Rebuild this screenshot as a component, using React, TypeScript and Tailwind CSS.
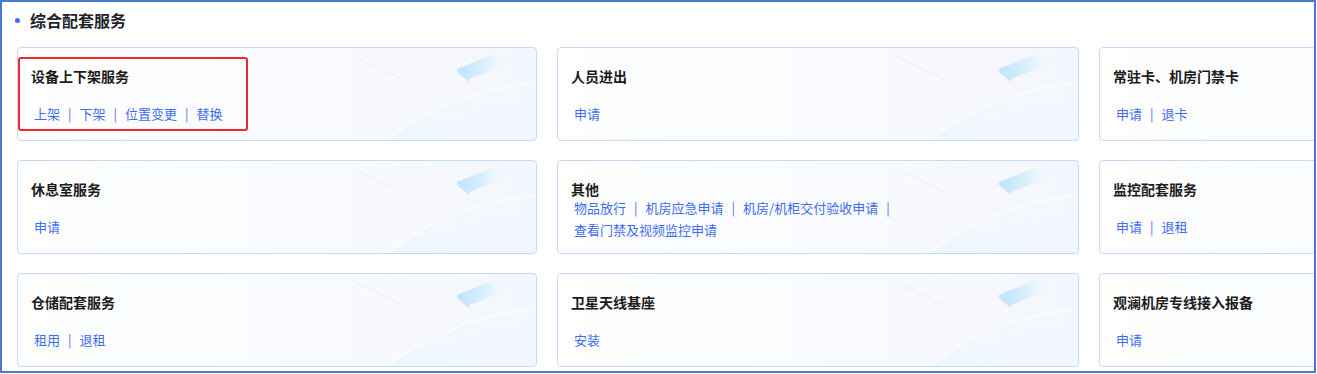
import React from 'react';

type Service = {
    title: string;
    links: string[];
    tight?: boolean;
    marked?: boolean;
};

const services: Service[] = [
    { title: '设备上下架服务', links: ['上架', '下架', '位置变更', '替换'], marked: true },
    { title: '人员进出', links: ['申请'] },
    { title: '常驻卡、机房门禁卡', links: ['申请', '退卡'] },
    { title: '休息室服务', links: ['申请'] },
    { title: '其他', links: ['物品放行', '机房应急申请', '机房/机柜交付验收申请', '查看门禁及视频监控申请'], tight: true },
    { title: '监控配套服务', links: ['申请', '退租'] },
    { title: '仓储配套服务', links: ['租用', '退租'] },
    { title: '卫星天线基座', links: ['安装'] },
    { title: '观澜机房专线接入报备', links: ['申请'] },
];

// faint backdrop drawn at the right side of every card
const CardDecor: React.FC = () => (
    <svg className="absolute right-0 top-0 pointer-events-none" width="220" height="94" viewBox="0 0 220 94">
        <defs>
            <linearGradient id="slab" x1="0" y1="0" x2="1" y2="0">
                <stop offset="0" stopColor="#bde2fb" />
                <stop offset="0.5" stopColor="#dcf0fd" />
                <stop offset="1" stopColor="#ffffff" stopOpacity="0" />
            </linearGradient>
            <linearGradient id="glow" x1="0" y1="1" x2="1" y2="0">
                <stop offset="0" stopColor="#e9f5fe" stopOpacity="0.8" />
                <stop offset="1" stopColor="#f6faff" stopOpacity="0.1" />
            </linearGradient>
        </defs>
        <path d="M70 94 Q130 45 220 34 L220 94 Z" fill="url(#glow)" />
        <path d="M70 94 Q130 45 220 34" fill="none" stroke="#ffffff" strokeWidth="1.5" opacity="0.7" />
        <line x1="40" y1="9" x2="86" y2="31" stroke="#eceff5" strokeWidth="1" />
        <line x1="102" y1="40" x2="170" y2="74" stroke="#f1f3f8" strokeWidth="1" />
        <polygon points="141,21 178,6 198,14 153,31" fill="url(#slab)" />
        <polygon points="141,21 153,31 153,34 141,24" fill="#b3dbf7" opacity="0.7" />
    </svg>
);

const ServiceCard: React.FC<{ item: Service }> = ({ item }) => (
    <div className="relative h-[94px] rounded-[4px] border border-[#c4dcf8] bg-gradient-to-r from-white via-[#fafbfe] to-[#f3f6fc]">
        <div className="absolute inset-0 overflow-hidden rounded-[4px]">
            <CardDecor />
        </div>
        <div className="relative pl-[13px] pt-[18px]">
            <div className="text-[14px] leading-[20px] font-bold text-[#1b1b1b]">{item.title}</div>
            <div className={`flex flex-wrap max-w-[330px] pl-[3px] text-[13px] leading-[22px] text-[#3d6cf0] ${item.tight ? 'mt-[-2px]' : 'mt-[17px]'}`}>
                {item.links.map((link, i) => (
                    <span key={link} className="whitespace-nowrap">
                        <span className="cursor-pointer">{link}</span>
                        {i < item.links.length - 1 && <span className="mx-[8px] text-[#5f6bef]">|</span>}
                    </span>
                ))}
            </div>
        </div>
        {item.marked && (
            <div className="absolute left-0 top-[9px] w-[230px] h-[74px] rounded-[3px] border-2 border-[#f0282b] z-10" />
        )}
    </div>
);

const App: React.FC = () => {
    return (
        <div className="w-[1317px] h-[374px] bg-white font-['Noto_Sans_CJK_SC','Microsoft_YaHei',sans-serif]">
            <div className="w-[1316px] h-[373px] border-2 border-[#4a78d0] overflow-hidden bg-white">
                <div className="flex items-center pt-[6px] pl-[13px] h-[30px] mb-[15px]">
                    <span className="w-[5px] h-[5px] rounded-full bg-[#3a6ff0]" />
                    <h2 className="ml-[10px] text-[16px] leading-[24px] font-semibold text-[#1f2329]">综合配套服务</h2>
                </div>
                <div className="grid grid-cols-[520px_522px_520px] gap-x-[20px] gap-y-[19px] pl-[15px]">
                    {services.map((s) => (
                        <ServiceCard key={s.title} item={s} />
                    ))}
                </div>
            </div>
        </div>
    );
};

export default App;
